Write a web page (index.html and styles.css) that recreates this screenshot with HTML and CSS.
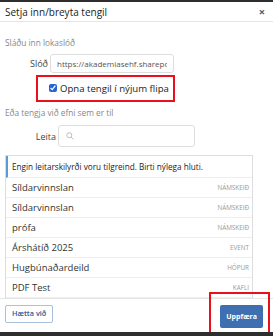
FILE: index.html
```html
<!DOCTYPE html>
<html>
  <head>
    <meta name="viewport" content="width=device-width,initial-scale=1.0">
    <title>Setja inn/breyta tengil</title>
    <link rel="stylesheet" href="styles.css">
  </head>
  <body>
    <div class="modal">
      <div class="modal-header">
        <h1 class="modal-title">Setja inn/breyta tengil</h1>
        <span class="close">&times;</span>
      </div>

      <div class="modal-body scroll">
        <p class="hint">Sláðu inn lokaslóð</p>
        <div class="field">
          <label class="field-label" for="url">Slóð</label>
          <input id="url" class="url-input" value="https://akademiasehf.sharepoint.com/sites/" />
        </div>
        <div class="check-row">
          <label class="check"><input type="checkbox" checked /> Opna tengil í nýjum flipa</label>
          <div class="mark mark-check"></div>
        </div>

        <p class="hint hint-second">Eða tengja við efni sem er til</p>
        <div class="field field-search">
          <label class="field-label" for="search">Leita</label>
          <div class="search-box">
            <svg width="8" height="8" viewBox="0 0 16 16"><circle cx="6.5" cy="6.5" r="5" fill="none" stroke="#aaa" stroke-width="1.5"/><path d="M10.2 10.2l4.5 4.5" stroke="#aaa" stroke-width="1.5"/></svg>
            <input id="search" class="search-input" />
          </div>
        </div>

        <div class="results scroll">
          <div class="results-info">Engin leitarskilyrði voru tilgreind. Birti nýlega hluti.</div>
          <ul class="results-list">
            <li><span>Síldarvinnslan</span><small>NÁMSKEIÐ</small></li>
            <li><span>Síldarvinnslan</span><small>NÁMSKEIÐ</small></li>
            <li><span>prófa</span><small>NÁMSKEIÐ</small></li>
            <li><span>Árshátíð 2025</span><small>EVENT</small></li>
            <li><span>Hugbúnaðardeild</span><small>HÓPUR</small></li>
            <li><span>PDF Test</span><small>KAFLI</small></li>
            <li><span>Kynning fyrir nýliða</span><small>KAFLI</small></li>
            <li><span>Öryggismál</span><small>NÁMSKEIÐ</small></li>
            <li><span>Starfsmannahandbók</span><small>KAFLI</small></li>
            <li><span>Sölusvið</span><small>HÓPUR</small></li>
            <li><span>Jólahlaðborð</span><small>EVENT</small></li>
            <li><span>Þjónustuver</span><small>HÓPUR</small></li>
            <li><span>Gæðamál</span><small>NÁMSKEIÐ</small></li>
            <li><span>Verkferlar</span><small>KAFLI</small></li>
            <li><span>Fjármálasvið</span><small>HÓPUR</small></li>
            <li><span>Skyndihjálp</span><small>NÁMSKEIÐ</small></li>
            <li><span>Sumarferð</span><small>EVENT</small></li>
            <li><span>Móttaka</span><small>KAFLI</small></li>
            <li><span>Tölvuöryggi</span><small>NÁMSKEIÐ</small></li>
            <li><span>Mannauður</span><small>HÓPUR</small></li>
          </ul>
        </div>
      </div>

      <div class="modal-footer">
        <button class="btn btn-cancel">Hætta við</button>
        <div class="save-wrap">
          <button class="btn btn-save">Uppfæra</button>
          <div class="mark mark-save"></div>
        </div>
      </div>
    </div>
  </body>
</html>
```

FILE: styles.css
```css
body { margin: 0; background: #2e2e2e; font-family: "Open Sans", "Noto Sans", sans-serif; color: #333; }

.modal { margin-top: 2px; height: 330px; background: #fff; display: flex; flex-direction: column; }

.modal-header { height: 19px; flex: none; display: flex; align-items: center; justify-content: space-between; padding: 0 8px 0 5px; border-bottom: 1px solid #e5e5e5; }
.modal-title { margin: 0; font-size: 10px; font-weight: 400; color: #222; }
.close { font-size: 11px; font-weight: 700; color: #555; line-height: 1; }

/* scrollbars */
.scroll::-webkit-scrollbar { width: 8px; }
.scroll::-webkit-scrollbar-track { background: #f1f1f1; }
.scroll::-webkit-scrollbar-thumb { background: #c1c1c1; }
.scroll::-webkit-scrollbar-button:single-button { display: block; height: 8px; background-color: #f1f1f1; background-repeat: no-repeat; background-position: center; background-size: 4px 3px; }
.scroll::-webkit-scrollbar-button:single-button:vertical:decrement { background-image: url("data:image/svg+xml;utf8,<svg xmlns='http://www.w3.org/2000/svg' viewBox='0 0 4 3'><path d='M2 0L4 3H0z' fill='%23a3a3a3'/></svg>"); }
.scroll::-webkit-scrollbar-button:single-button:vertical:increment { background-image: url("data:image/svg+xml;utf8,<svg xmlns='http://www.w3.org/2000/svg' viewBox='0 0 4 3'><path d='M0 0H4L2 3z' fill='%23505050'/></svg>"); }

.modal-body { flex: 1; min-height: 0; margin: 7px 3px 0 0; overflow-y: scroll; padding: 8px 0 0 5px; }

.hint { margin: 0; font-size: 8.3px; line-height: 12px; color: #888; }
.hint-second { margin-top: 4px; }

.field { display: flex; align-items: center; margin-top: 5px; }
.field-label { width: 43px; text-align: right; padding-right: 2px; font-size: 9px; color: #444; }
.url-input { box-sizing: border-box; width: 124px; height: 19px; padding: 0 6px; border: 1px solid #ddd; border-radius: 3px; font-family: inherit; font-size: 8px; color: #555; }

.check-row { position: relative; height: 30px; display: flex; align-items: center; padding-left: 44px; }
.check { display: flex; align-items: center; font-size: 9.6px; color: #222; }
.check input { width: 8px; height: 8px; margin: 0 3px 0 0; accent-color: #2563d6; }

.mark { position: absolute; border: 2px solid #e8101c; box-sizing: border-box; pointer-events: none; }
.mark-check { left: 31px; top: 2px; width: 139px; height: 27px; }

.field-search { margin-top: 6px; }
.field-search .field-label { width: 51px; }
.search-box { box-sizing: border-box; display: flex; align-items: center; gap: 4px; width: 137px; height: 22px; padding-left: 7px; border: 1px solid #ddd; border-radius: 3px; }
.search-input { border: none; outline: none; width: 100px; font-size: 8px; }

.results { margin-top: 8px; width: 246px; height: 165px; overflow-y: scroll; border: 1px solid #ddd; }
.results-info { height: 21px; display: flex; align-items: center; padding-left: 4px; border-left: 2px solid #5b9bd5; border-bottom: 1px solid #eee; font-size: 8.2px; color: #222; white-space: nowrap; }
.results-list { list-style: none; margin: 0; padding: 0; }
.results-list li { height: 19px; display: flex; align-items: center; justify-content: space-between; padding: 0 3px 0 6px; border-bottom: 1px solid #eee; font-size: 9.5px; color: #333; }
.results-list small { font-size: 6.3px; color: #999; }

.modal-footer { height: 27px; flex: none; display: flex; align-items: flex-start; justify-content: space-between; padding: 6px 10px 0 5px; border-top: 1px solid #e5e5e5; }
.btn { margin: 0; font-family: inherit; border-radius: 2px; cursor: pointer; line-height: 1; }
.btn-cancel { height: 18px; padding: 0 6px; background: #fff; color: #2a5a94; border: 1px solid #a9c1dd; font-size: 7.3px; font-weight: 600; }
.btn-save { height: 23px; padding: 0 6px; background: #3e6fb0; color: #fff; border: none; font-size: 7px; font-weight: 700; }
.save-wrap { position: relative; display: flex; }
.mark-save { left: -11px; top: -13px; width: 61px; height: 43px; }
```
